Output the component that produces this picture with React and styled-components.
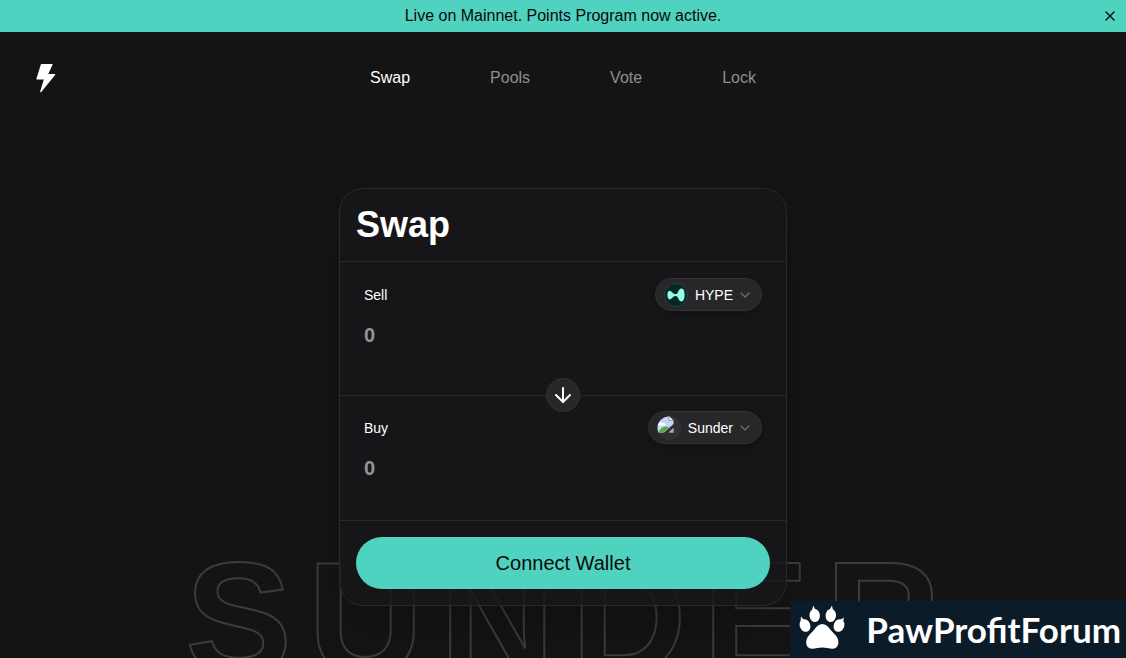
import React, { useState } from "react";
import styled, { createGlobalStyle } from "styled-components";
import { ArrowDown, ChevronDown, X } from "lucide-react";

const GlobalStyle = createGlobalStyle`
  * {
    box-sizing: border-box;
  }
  body {
    margin: 0;
    background: #141414;
    color: #fff;
    font-family: "Liberation Sans", Arial, sans-serif;
    font-size: 16px;
    line-height: 24px;
  }
  button,
  input {
    font: inherit;
    color: inherit;
  }
`;

const Page = styled.div`
  position: relative;
  min-height: 100vh;
  overflow: hidden;
  isolation: isolate;
`;

const Banner = styled.div`
  display: grid;
  grid-template-columns: 1fr auto 1fr;
  align-items: center;
  height: 32px;
  padding: 0 8px;
  background: #50d2c1;
  color: #0a0a0a;
`;

const BannerText = styled.p`
  grid-column: 2;
  margin: 0;
`;

const CloseButton = styled.button`
  display: flex;
  justify-self: end;
  padding: 0;
  border: none;
  background: none;
  cursor: pointer;
`;

const Header = styled.header`
  display: grid;
  grid-template-columns: 1fr auto 1fr;
  align-items: center;
  height: 92px;
  padding: 0 32px;
`;

const LogoLink = styled.a`
  display: flex;
  justify-self: start;
`;

const Nav = styled.nav`
  display: flex;
  gap: 80px;
`;

const NavItem = styled.a`
  color: ${({ $active }) => ($active ? "#fff" : "#8f8f8f")};
  text-decoration: none;
  &:hover {
    color: #fff;
  }
`;

const Main = styled.main`
  display: flex;
  justify-content: center;
  padding: 64px 16px 52px;
`;

const BackgroundWord = styled.div`
  position: absolute;
  z-index: -1;
  bottom: -40px;
  left: 0;
  right: 0;
  padding-left: 16px;
  color: transparent;
  font-size: 160px;
  font-weight: 700;
  line-height: 160px;
  letter-spacing: 16px;
  text-align: center;
  white-space: nowrap;
  pointer-events: none;
  -webkit-text-stroke: 2px #3b3b40;
`;

const Card = styled.section`
  width: 100%;
  max-width: 448px;
  border: 1px solid #29292b;
  border-radius: 24px;
  background: rgba(23, 23, 25, 0.8);
  box-shadow: 0 25px 50px -12px rgba(0, 0, 0, 0.25);
`;

const CardHeader = styled.div`
  padding: 16px;
  border-bottom: 1px solid #29292b;
`;

const Title = styled.h1`
  margin: 0;
  font-size: 36px;
  line-height: 40px;
`;

const TokenSection = styled.div`
  height: 125px;
  padding: 16px 24px;
`;

const TokenRow = styled.div`
  display: flex;
  align-items: center;
  justify-content: space-between;
  margin-bottom: 8px;
`;

const Label = styled.label`
  font-size: 14px;
  line-height: 20px;
`;

const AmountInput = styled.input`
  width: 100%;
  height: 32px;
  padding: 0;
  border: none;
  outline: none;
  background: transparent;
  font-size: 20px;
  font-weight: 700;
  &::placeholder {
    color: #949496;
    opacity: 1;
  }
`;

const TokenButton = styled.button`
  display: flex;
  align-items: center;
  gap: 4px;
  height: 33px;
  padding: 0 8px;
  border: 1px solid #323234;
  border-radius: 17px;
  background: #27272a;
  box-shadow: 0 4px 8px rgba(0, 0, 0, 0.2);
  font-size: 14px;
  line-height: 20px;
  cursor: pointer;
  svg {
    flex: none;
  }
`;

const TokenName = styled.span`
  margin-left: 3px;
`;

const Divider = styled.div`
  position: relative;
  display: flex;
  align-items: center;
  justify-content: center;
  height: 0;
  margin-top: 8px;
  &::before {
    content: "";
    position: absolute;
    top: 0;
    left: 0;
    right: 0;
    border-top: 1px solid #29292b;
  }
`;

const SwitchButton = styled.button`
  position: relative;
  display: flex;
  align-items: center;
  justify-content: center;
  flex: none;
  width: 34px;
  height: 34px;
  padding: 0;
  border: 1px solid #323234;
  border-radius: 50%;
  background: #27272a;
  cursor: pointer;
`;

const CardFooter = styled.div`
  padding: 16px;
  border-top: 1px solid #29292b;
`;

const ConnectButton = styled.button`
  width: 100%;
  height: 52px;
  border: none;
  border-radius: 26px;
  background: #50d2c1;
  color: #0a0a0a;
  font-size: 20px;
  line-height: 28px;
  cursor: pointer;
`;

const ForumBadge = styled.a`
  position: fixed;
  right: 0;
  bottom: 0;
  display: flex;
  align-items: flex-start;
  gap: 20px;
  height: 57px;
  padding: 0 5px 0 8px;
  background: #0b1b28;
  color: #fff;
  font-family: Lato, sans-serif;
  font-size: 35px;
  font-weight: 700;
  line-height: 56px;
  text-decoration: none;
`;

const BoltLogo = () => (
  <svg width="28" height="32" viewBox="0 0 28 32" aria-hidden="true">
    <path
      d="M9.5 2.5H20L15.4 12.5H22.6L8.8 29.5L12.6 17H5Z"
      fill="#fff"
      stroke="#fff"
      strokeWidth="1.2"
      strokeLinejoin="round"
    />
  </svg>
);

const HypeIcon = () => (
  <svg width="24" height="24" viewBox="0 0 24 24" aria-hidden="true">
    <circle cx="12" cy="12" r="11.5" fill="#072723" stroke="#26403d" />
    <path
      d="M3.4 12c0-2.700.9-4.200 2.300-4.200 1.900 0 2.700 2.900 4.900 3.300 1.400.2 2.400-.1 3.200-1.300.8-1.600 1.500-4.200 3.600-4.200 2.300 0 3.200 2.900 3.200 6.400s-.9 6.400-3.200 6.400c-2.200 0-2.800-2.800-3.800-4.200-.8-1.100-2-1.300-3.200-.9-2 .7-2.800 3.100-4.700 3.100-1.400 0-2.300-1.700-2.300-4.400Z"
      fill="#97fce4"
    />
  </svg>
);

// browser style "missing image" picture inside a token circle
const MissingTokenIcon = () => (
  <svg width="24" height="24" viewBox="0 0 24 24" aria-hidden="true">
    <defs>
      <clipPath id="tokenCircle">
        <circle cx="12" cy="12" r="11.5" />
      </clipPath>
    </defs>
    <circle cx="12" cy="12" r="11.5" fill="#303032" stroke="#353537" />
    <g clipPath="url(#tokenCircle)">
      <path d="M0 0H12L16.5 4.5V8L7 16.5H0Z" fill="#c3d5f8" />
      <path d="M1 9.5a2.5 2.5 0 0 1 4-2.5 2.5 2.5 0 0 1 3.5 2.5Z" fill="#fff" />
      <path d="M1 16.5C3.500 12.500 6 10.500 8.500 10.500c1.500 0 2.500.5 3.200 1L6.500 16.500Z" fill="#57ad32" />
      <path d="M11.500 16.500L16.500 12V16.500Z" fill="#b9cbe9" />
      <path d="M13 16.500L16.500 13.500V16.500Z" fill="#6bb14b" />
      <path d="M12 0V4.5H16.5Z" fill="#f1f1f1" stroke="#88898c" strokeWidth="0.8" />
    </g>
  </svg>
);

const PawIcon = () => (
  <svg width="48" height="50" viewBox="0 0 48 50" fill="#fff" aria-hidden="true">
    <ellipse cx="7" cy="24.500" rx="5.200" ry="6.500" transform="rotate(-22 7 24.500)" />
    <ellipse cx="16.700" cy="14.500" rx="5.200" ry="6.600" transform="rotate(-8 16.700 14.500)" />
    <ellipse cx="32.800" cy="14.500" rx="5.200" ry="6.600" transform="rotate(8 32.800 14.500)" />
    <ellipse cx="41" cy="24.500" rx="5.200" ry="6.500" transform="rotate(22 41 24.500)" />
    <path d="M2.500 21L3 15.500L6 19ZM14 9.500L15.200 4.500L17.500 9ZM31.500 9L34 4.500L35 9.500ZM42 19L46 16.500L45 21Z" />
    <path d="M24.300 23c-3.200 0-5.600 2.300-8 5.600-2.200 3.100-4.800 4.600-6.600 7.400-2.600 4.200-2.100 11.300 3.900 11.700 3.600.2 6.900-1.100 10.700-1.100s7.100 1.300 10.700 1.100c6-.4 6.500-7.500 3.900-11.700-1.800-2.800-4.400-4.300-6.600-7.400-2.400-3.300-4.800-5.600-8-5.600Z" />
  </svg>
);

const links = [
  { name: "Swap", path: "#swap" },
  { name: "Pools", path: "#pools" },
  { name: "Vote", path: "#vote" },
  { name: "Lock", path: "#lock" },
];

const TokenField = ({ id, label, token, icon }) => {
  const [amount, setAmount] = useState("");
  return (
    <TokenSection>
      <TokenRow>
        <Label htmlFor={id}>{label}</Label>
        <TokenButton type="button">
          {icon}
          <TokenName>{token}</TokenName>
          <ChevronDown size={16} color="#6b6b6e" />
        </TokenButton>
      </TokenRow>
      <AmountInput
        id={id}
        inputMode="decimal"
        placeholder="0"
        value={amount}
        onChange={(e) => setAmount(e.target.value)}
      />
    </TokenSection>
  );
};

const App = () => {
  const [showBanner, setShowBanner] = useState(true);
  return (
    <Page>
      <GlobalStyle />
      {showBanner && (
        <Banner>
          <BannerText>Live on Mainnet. Points Program now active.</BannerText>
          <CloseButton aria-label="Close" onClick={() => setShowBanner(false)}>
            <X size={16} />
          </CloseButton>
        </Banner>
      )}
      <Header>
        <LogoLink href="#home" aria-label="Home">
          <BoltLogo />
        </LogoLink>
        <Nav>
          {links.map((link, index) => (
            <NavItem href={link.path} key={link.name} $active={index === 0}>
              {link.name}
            </NavItem>
          ))}
        </Nav>
      </Header>
      <BackgroundWord aria-hidden="true">SUNDER</BackgroundWord>
      <Main>
        <Card>
          <CardHeader>
            <Title>Swap</Title>
          </CardHeader>
          <TokenField id="sell" label="Sell" token="HYPE" icon={<HypeIcon />} />
          <Divider>
            <SwitchButton type="button" aria-label="Switch tokens">
              <ArrowDown size={24} />
            </SwitchButton>
          </Divider>
          <TokenField id="buy" label="Buy" token="Sunder" icon={<MissingTokenIcon />} />
          <CardFooter>
            <ConnectButton type="button">Connect Wallet</ConnectButton>
          </CardFooter>
        </Card>
      </Main>
      <ForumBadge href="#forum">
        <PawIcon />
        PawProfitForum
      </ForumBadge>
    </Page>
  );
};

export default App;
